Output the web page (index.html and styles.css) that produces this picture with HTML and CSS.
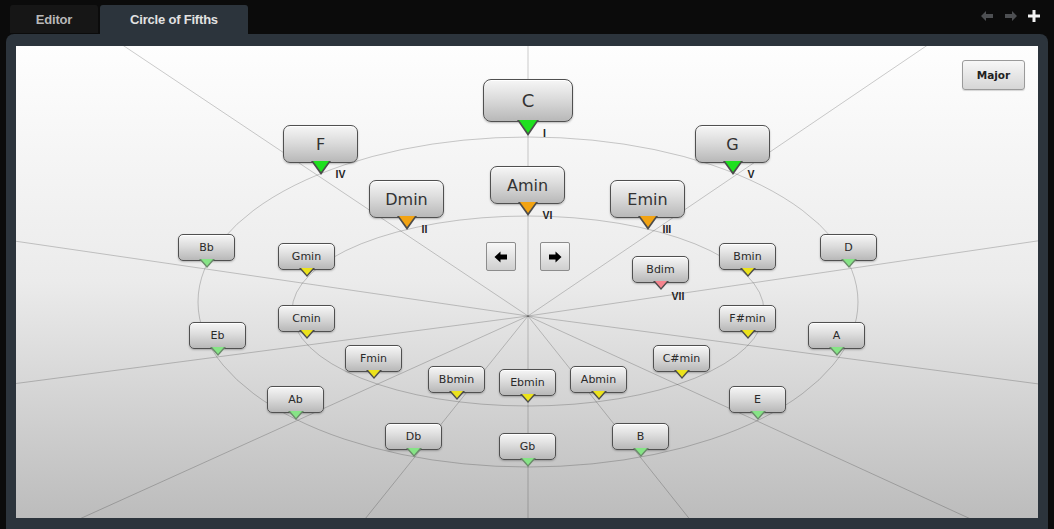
FILE: index.html
```html
<!DOCTYPE html>
<html>
<head>
<meta charset="utf-8">
<link rel="stylesheet" href="styles.css">
</head>
<body>
<div class="app">
  <div class="tabbar">
    <div class="tab">Editor</div>
    <div class="tab active">Circle of Fifths</div>
    <div class="spacer"></div>
    <div class="tools">
      <svg width="14" height="12" viewBox="0 0 14 12"><path d="M1 6 L6 1 L6 4 L13 4 L13 8 L6 8 L6 11 Z" fill="#4d4f52"/></svg>
      <svg width="14" height="12" viewBox="0 0 14 12"><path d="M13 6 L8 1 L8 4 L1 4 L1 8 L8 8 L8 11 Z" fill="#4d4f52"/></svg>
      <svg width="12" height="12" viewBox="0 0 12 12"><path d="M4.5 0 H7.5 V4.5 H12 V7.5 H7.5 V12 H4.5 V7.5 H0 V4.5 H4.5 Z" fill="#f2f2f2"/></svg>
    </div>
  </div>
  <div class="panel">
    <div class="canvas">
      <svg class="grid" width="1022" height="472" viewBox="0 0 1022 472">
        <g stroke="rgba(0,0,0,0.2)" stroke-width="1" fill="none">
          <ellipse cx="512" cy="256" rx="330" ry="165"/>
          <ellipse cx="512" cy="265" rx="236" ry="95"/>
          <line x1="512" y1="270" x2="512" y2="-804"/>
          <line x1="512" y1="270" x2="1742" y2="-564"/>
          <line x1="512" y1="270" x2="2426" y2="-12"/>
          <line x1="512" y1="270" x2="2360" y2="516"/>
          <line x1="512" y1="270" x2="1886" y2="900"/>
          <line x1="512" y1="270" x2="1190" y2="1122"/>
          <line x1="512" y1="270" x2="512" y2="1182"/>
          <line x1="512" y1="270" x2="-172" y2="1122"/>
          <line x1="512" y1="270" x2="-880" y2="900"/>
          <line x1="512" y1="270" x2="-1354" y2="516"/>
          <line x1="512" y1="270" x2="-1420" y2="-12"/>
          <line x1="512" y1="270" x2="-736" y2="-564"/>
        </g>
      </svg>

      <button class="mode">Major</button>

      <div class="nav">
        <button class="navbtn"><svg width="14" height="12" viewBox="0 0 14 12"><path d="M0.5 6 L6.5 0.5 L6.5 3.5 L13 3.5 L13 8.5 L6.5 8.5 L6.5 11.5 Z" fill="#000"/></svg></button>
        <button class="navbtn"><svg width="14" height="12" viewBox="0 0 14 12"><path d="M13.5 6 L7.5 0.5 L7.5 3.5 L1 3.5 L1 8.5 L7.5 8.5 L7.5 11.5 Z" fill="#000"/></svg></button>
      </div>

      <div class="chord huge" style="left:467px;top:33px"><div class="box">C</div><div class="tip green"></div><span class="num">I</span></div>
      <div class="chord big" style="left:267px;top:79px"><div class="box">F</div><div class="tip green"></div><span class="num">IV</span></div>
      <div class="chord big" style="left:679px;top:79px"><div class="box">G</div><div class="tip green"></div><span class="num">V</span></div>
      <div class="chord big" style="left:353px;top:134px"><div class="box">Dmin</div><div class="tip orange"></div><span class="num">II</span></div>
      <div class="chord big" style="left:474px;top:120px"><div class="box">Amin</div><div class="tip orange"></div><span class="num">VI</span></div>
      <div class="chord big" style="left:594px;top:134px"><div class="box">Emin</div><div class="tip orange"></div><span class="num">III</span></div>

      <div class="chord small" style="left:162px;top:188px"><div class="box">Bb</div><div class="tip pale"></div></div>
      <div class="chord small" style="left:804px;top:188px"><div class="box">D</div><div class="tip pale"></div></div>
      <div class="chord small" style="left:262px;top:197px"><div class="box">Gmin</div><div class="tip yellow"></div></div>
      <div class="chord small" style="left:703px;top:197px"><div class="box">Bmin</div><div class="tip yellow"></div></div>
      <div class="chord small" style="left:616px;top:210px"><div class="box">Bdim</div><div class="tip pink"></div><span class="num">VII</span></div>
      <div class="chord small" style="left:262px;top:259px"><div class="box">Cmin</div><div class="tip yellow"></div></div>
      <div class="chord small" style="left:703px;top:259px"><div class="box">F#min</div><div class="tip yellow"></div></div>
      <div class="chord small" style="left:173px;top:276px"><div class="box">Eb</div><div class="tip pale"></div></div>
      <div class="chord small" style="left:792px;top:276px"><div class="box">A</div><div class="tip pale"></div></div>
      <div class="chord small" style="left:329px;top:299px"><div class="box">Fmin</div><div class="tip yellow"></div></div>
      <div class="chord small" style="left:637px;top:299px"><div class="box">C#min</div><div class="tip yellow"></div></div>
      <div class="chord small" style="left:412px;top:320px"><div class="box">Bbmin</div><div class="tip yellow"></div></div>
      <div class="chord small" style="left:483px;top:323px"><div class="box">Ebmin</div><div class="tip yellow"></div></div>
      <div class="chord small" style="left:554px;top:320px"><div class="box">Abmin</div><div class="tip yellow"></div></div>
      <div class="chord small" style="left:251px;top:340px"><div class="box">Ab</div><div class="tip pale"></div></div>
      <div class="chord small" style="left:713px;top:340px"><div class="box">E</div><div class="tip pale"></div></div>
      <div class="chord small" style="left:369px;top:377px"><div class="box">Db</div><div class="tip pale"></div></div>
      <div class="chord small" style="left:596px;top:377px"><div class="box">B</div><div class="tip pale"></div></div>
      <div class="chord small" style="left:483px;top:387px"><div class="box">Gb</div><div class="tip pale"></div></div>
    </div>
  </div>
</div>
</body>
</html>
```

FILE: styles.css
```css
* { box-sizing: border-box; }
html, body { margin: 0; padding: 0; }
body {
  background: #0b0b0b;
  width: 1054px;
  height: 529px;
  overflow: hidden;
  font-family: "DejaVu Sans", "Liberation Sans", sans-serif;
}
.app { display: flex; flex-direction: column; height: 529px; }
.tabbar {
  height: 34px;
  display: flex;
  align-items: flex-end;
  padding-left: 10px;
  gap: 2px;
}
.tab {
  height: 28px;
  margin-bottom: 1px;
  display: flex;
  align-items: center;
  justify-content: center;
  background: #161616;
  color: #b8b8b8;
  font-family: "Liberation Sans", sans-serif;
  font-weight: bold;
  font-size: 13px;
  letter-spacing: -0.2px;
  border-radius: 3px 3px 0 0;
  width: 88px;
}
.tab.active {
  background: #2c343c;
  color: #e2e2e2;
  width: 148px;
  height: 29px;
  margin-bottom: 0;
}
.spacer { flex: 1; }
.tools {
  align-self: center;
  display: flex;
  align-items: center;
  gap: 10px;
  padding-right: 14px;
  margin-top: -2px;
}
.panel {
  margin: 0 6px;
  height: 495px;
  background: #2c343c;
  border-radius: 8px 8px 0 0;
  padding: 12px 10px 11px 10px;
}
.canvas {
  position: relative;
  width: 1022px;
  height: 472px;
  overflow: hidden;
  background: linear-gradient(#fefefe 0%, #ebebeb 50%, #bcbcbc 100%);
}
.grid { position: absolute; left: 0; top: 0; }

.mode {
  position: absolute;
  right: 13px;
  top: 14px;
  width: 63px;
  height: 30px;
  border: 1px solid #9a9a9a;
  border-radius: 3px;
  background: linear-gradient(#f7f7f7, #d6d6d6);
  font-family: "DejaVu Sans", sans-serif;
  font-weight: bold;
  font-size: 10.5px;
  color: #222;
  box-shadow: 0 1px 1px rgba(0,0,0,0.15);
  padding: 0;
}
.nav {
  position: absolute;
  left: 470px;
  top: 196px;
  display: flex;
  gap: 24px;
}
.navbtn {
  width: 30px;
  height: 29px;
  padding: 0;
  border: 1px solid #8c8c8c;
  border-radius: 2px;
  background: linear-gradient(#f8f8f8, #cfcfcf);
  display: flex;
  align-items: center;
  justify-content: center;
}

.chord { position: absolute; }
.chord .box {
  position: relative;
  z-index: 1;
  display: flex;
  align-items: center;
  justify-content: center;
  border: 1px solid #505050;
  border-radius: 6px;
  background: linear-gradient(#f6f6f6 0%, #dcdcdc 45%, #b8b8b8 100%);
  box-shadow: inset 0 1px 0 #fff, 0 1px 2px rgba(0,0,0,0.25);
  color: #333;
}
.chord.huge .box { width: 90px; height: 43px; font-size: 18px; border-radius: 8px; }
.chord.big .box { width: 75px; height: 38px; font-size: 16px; border-radius: 7px; }
.chord.small .box { width: 57px; height: 27px; font-size: 11px; color: #2a2a2a; border-radius: 5px; }

.tip {
  position: relative;
  z-index: 2;
  margin: -2px auto 0;
  width: 0;
  height: 0;
  border-style: solid;
  border-color: #4c4c4c transparent transparent transparent;
}
.tip::after {
  content: "";
  position: absolute;
  width: 0;
  height: 0;
  border-style: solid;
  border-color: transparent;
}
.huge .tip { border-width: 16px 11px 0 11px; }
.huge .tip::after { left: -9px; top: -16px; border-width: 13px 9px 0 9px; }
.big .tip { border-width: 14px 10px 0 10px; }
.big .tip::after { left: -8px; top: -14px; border-width: 11px 8px 0 8px; }
.small .tip { border-width: 9px 8px 0 8px; }
.small .tip::after { left: -6px; top: -9px; border-width: 7px 6px 0 6px; }

.tip.green::after { border-top-color: #1fe01f; }
.tip.orange::after { border-top-color: #f2a312; }
.tip.pale::after { border-top-color: #86e486; }
.tip.yellow::after { border-top-color: #ece31c; }
.tip.pink::after { border-top-color: #f5848e; }
.tip.pale { border-top-color: #6a8a6a; }

.num {
  position: absolute;
  left: calc(50% + 15px);
  font-family: "Liberation Sans", sans-serif;
  font-weight: bold;
  font-size: 10.5px;
  color: #262626;
}
.huge .num { top: 48px; }
.big .num { top: 43px; }
.small .num { left: calc(50% + 11px); top: 34px; }
```
